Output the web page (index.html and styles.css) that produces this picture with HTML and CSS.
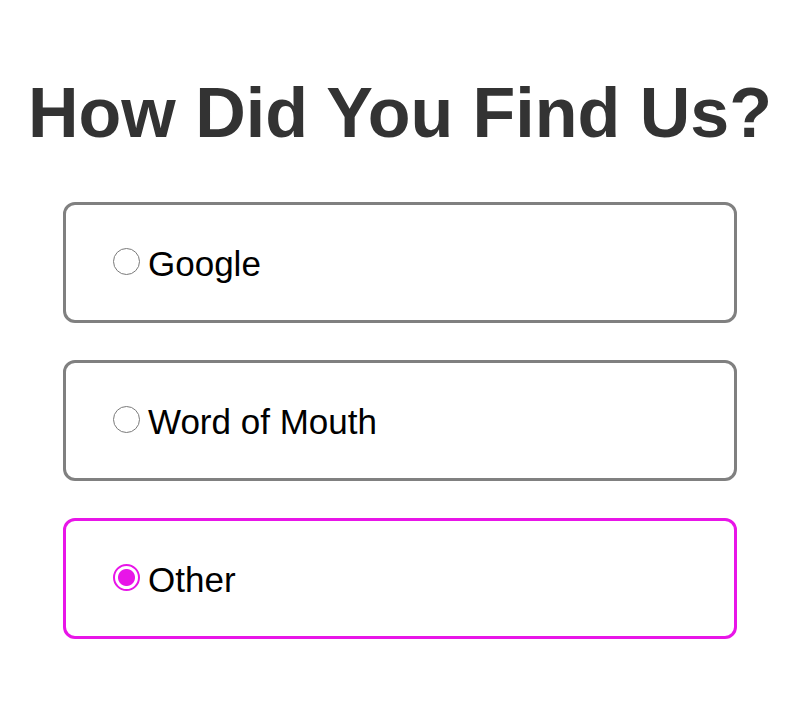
FILE: index.html
```html
<!DOCTYPE html>
<html lang="en">
<head>
<meta charset="utf-8">
<title>How Did You Find Us?</title>
<link rel="stylesheet" href="styles.css">
</head>
<body>
<main class="survey">
  <h1 class="title">How Did You Find Us?</h1>
  <form class="options">
    <label class="option">
      <input type="radio" name="source" class="radio">
      <span class="option-text">Google</span>
    </label>
    <label class="option">
      <input type="radio" name="source" class="radio">
      <span class="option-text">Word of Mouth</span>
    </label>
    <label class="option option-selected">
      <input type="radio" name="source" class="radio" checked>
      <span class="option-text">Other</span>
    </label>
  </form>
</main>
</body>
</html>
```
FILE: styles.css
```css
html, body {
  margin: 0;
  padding: 0;
  background: #fff;
}
body {
  font-family: "Liberation Sans", Arial, sans-serif;
}
.survey {
  padding-top: 79px;
  display: flex;
  flex-direction: column;
  align-items: center;
}
.title {
  margin: 0;
  font-size: 70px;
  line-height: 69px;
  font-weight: bold;
  color: #333;
  text-align: center;
  white-space: nowrap;
}
.options {
  margin-top: 54px;
  display: flex;
  flex-direction: column;
  gap: 37px;
  width: 674px;
}
.option {
  box-sizing: border-box;
  height: 121px;
  border: 3px solid #808080;
  border-radius: 12px;
  display: flex;
  align-items: center;
  padding-left: 47px;
  gap: 8px;
  cursor: pointer;
}
.option-selected {
  border-color: #e815e8;
}
.radio {
  appearance: none;
  -webkit-appearance: none;
  margin: 0;
  width: 27px;
  height: 27px;
  border: 1.5px solid #7a7a7a;
  border-radius: 50%;
  box-sizing: border-box;
  background: #fff;
  flex: none;
  position: relative;
  top: -1px;
}
.radio:checked {
  border: 2px solid #e815e8;
  background: radial-gradient(circle, #e815e8 0 8px, #fff 9px);
}
.option-text {
  font-size: 35px;
  color: #000;
  padding-top: 3px;
}
```
